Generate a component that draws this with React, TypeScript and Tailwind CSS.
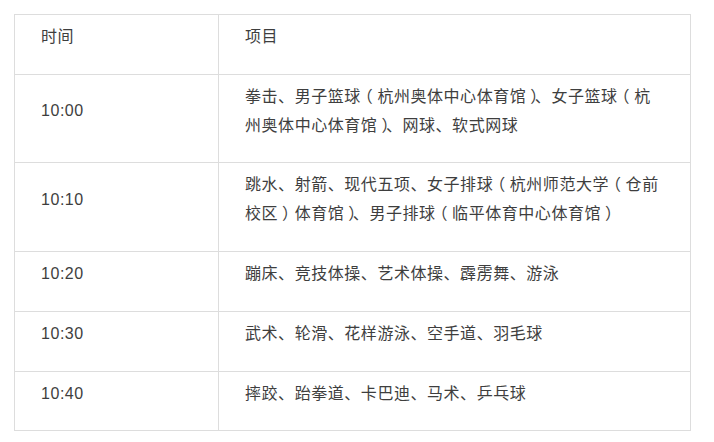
const rows: { time: string; lines: string[] }[] = [
  {
    time: "10:00",
    lines: ["拳击、男子篮球（杭州奥体中心体育馆）、女子篮球（杭", "州奥体中心体育馆）、网球、软式网球"],
  },
  {
    time: "10:10",
    lines: ["跳水、射箭、现代五项、女子排球（杭州师范大学（仓前", "校区）体育馆）、男子排球（临平体育中心体育馆）"],
  },
  { time: "10:20", lines: ["蹦床、竞技体操、艺术体操、霹雳舞、游泳"] },
  { time: "10:30", lines: ["武术、轮滑、花样游泳、空手道、羽毛球"] },
  { time: "10:40", lines: ["摔跤、跆拳道、卡巴迪、马术、乒乓球"] },
];

// the screenshot's font centres full-width parens; move them by trading letter-spacing with the neighbour
function Line({ text }: { text: string }) {
  const chars = Array.from(text);
  return (
    <div className="whitespace-nowrap">
      {chars.map((c, i) => {
        const next = chars[i + 1];
        if (next === "（" || c === "）") {
          return (
            <span key={i} className="tracking-[-3.456px]">
              {c}
            </span>
          );
        }
        if (c === "（" || next === "）") {
          return (
            <span key={i} className="tracking-[4.544px]">
              {c}
            </span>
          );
        }
        return c;
      })}
    </div>
  );
}

export default function App() {
  return (
    <div className="min-h-screen bg-white pt-[14px] pl-[14px] font-['Liberation_Sans','Noto_Sans_CJK_SC',sans-serif] text-[16px] leading-[1.8] tracking-[0.544px] text-[#3e3e3e]">
      <table className="w-[677px] table-fixed border-collapse">
        <thead>
          <tr>
            <th className="w-[204px] border border-[#dddddd] pt-2 pb-[22px] pl-[26px] text-left align-middle font-normal">
              时间
            </th>
            <th className="border border-[#dddddd] pt-2 pb-[22px] pl-[26px] text-left align-middle font-normal">
              项目
            </th>
          </tr>
        </thead>
        <tbody>
          {rows.map((r) => (
            <tr key={r.time}>
              <td className="border border-[#dddddd] pt-2 pb-[22px] pl-[26px] align-middle">{r.time}</td>
              <td className="border border-[#dddddd] pt-2 pb-[22px] pl-[26px] align-middle">
                {r.lines.map((l) => (
                  <Line key={l} text={l} />
                ))}
              </td>
            </tr>
          ))}
        </tbody>
      </table>
    </div>
  );
}
